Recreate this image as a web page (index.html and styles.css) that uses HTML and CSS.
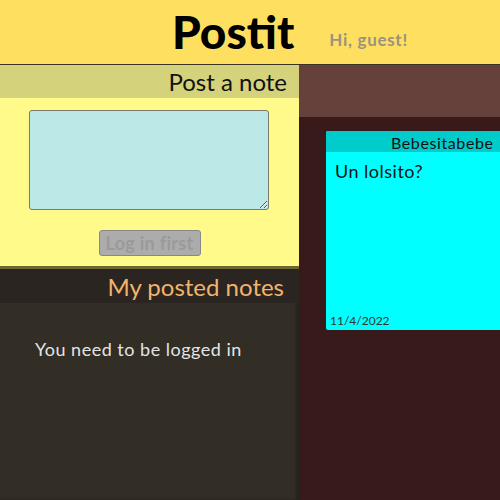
FILE: index.html
```html
<!DOCTYPE html>
<html>
<head>
<meta charset="utf-8">
<link rel="stylesheet" href="styles.css">
</head>
<body>
<header class="topbar">
  <h1 class="brand">Postit</h1>
  <span class="greeting">Hi, guest!</span>
</header>
<main class="layout">
  <aside class="side">
    <section class="post">
      <h2 class="post-title">Post a note</h2>
      <div class="post-form">
        <textarea class="post-input"></textarea>
        <button class="post-btn" disabled>Log in first</button>
      </div>
    </section>
    <section class="mine">
      <h2 class="mine-title">My posted notes</h2>
      <p class="mine-msg">You need to be logged in</p>
    </section>
  </aside>
  <section class="board">
    <div class="board-top"></div>
    <div class="board-notes">
      <article class="note">
        <div class="note-author">Bebesitabebe</div>
        <div class="note-body">Un lolsito?</div>
        <div class="note-date">11/4/2022</div>
      </article>
    </div>
  </section>
</main>
</body>
</html>
```
FILE: styles.css
```css
* { box-sizing: border-box; }
html, body { margin: 0; height: 100%; }
body {
  font-family: Lato, "Open Sans", sans-serif;
  background: #381a1a;
  overflow: hidden;
}
.topbar {
  height: 65px;
  background: #ffdf60;
  border-bottom: 1px solid #3a3420;
  display: flex;
  align-items: flex-start;
  padding-left: 172px;
}
.brand {
  margin: 0;
  font-size: 46px;
  font-weight: 900;
  line-height: 64px;
  color: #000;
}
.greeting {
  margin: 30px 0 0 35px;
  font-size: 17px;
  line-height: 20px;
  font-weight: 700;
  letter-spacing: 0.7px;
  color: #9a9282;
}
.layout {
  display: grid;
  grid-template-columns: 299px 1fr;
  height: 435px;
}
.side {
  display: flex;
  flex-direction: column;
  background: #322d25;
  box-shadow: inset -3px 0 3px rgba(0,0,0,0.25);
}
.post {
  background: #fffa8a;
  border-bottom: 3px solid #6b6530;
}
.post-title {
  margin: 0;
  height: 33px;
  background: #d4d27a;
  font-size: 24px;
  font-weight: 400;
  line-height: 34px;
  text-align: right;
  padding-right: 12px;
  color: #111;
}
.post-form {
  display: flex;
  flex-direction: column;
  align-items: center;
  padding: 12px 0 10px;
  gap: 20px;
}
.post-input {
  display: block;
  width: 240px;
  height: 100px;
  margin-left: -1px;
  background: #bde8e8;
  border: 1px solid #7a7a6a;
  border-radius: 3px;
  resize: both;
}
.post-btn {
  font-family: Lato, sans-serif;
  font-size: 18px;
  font-weight: 700;
  letter-spacing: 0.3px;
  width: 102px;
  height: 26px;
  padding: 0;
  color: #9a9a9a;
  background: #acacac;
  border: 1px solid #888;
  border-radius: 3px;
}
.mine { flex: 1; }
.mine-title {
  margin: 0;
  height: 34px;
  background: #2a2520;
  font-size: 24px;
  font-weight: 400;
  line-height: 36px;
  text-align: right;
  padding-right: 15px;
  color: #f2b36c;
}
.mine-msg {
  margin: 35px 0 0 35px;
  font-size: 18px;
  letter-spacing: 0.5px;
  color: #e4e4e4;
}
.board { display: flex; flex-direction: column; min-width: 0; overflow: hidden; }
.board-top { height: 52px; background: #66403a; }
.board-notes { padding: 14px 0 0 27px; display: flex; }
.note {
  flex: none;
  width: 240px;
  height: 199px;
  background: #00ffff;
  border-radius: 2px;
  display: flex;
  flex-direction: column;
}
.note-author {
  height: 21px;
  background: #00cccc;
  font-size: 16px;
  letter-spacing: 0.6px;
  line-height: 23px;
  padding-left: 65px;
  color: #111;
  border-radius: 2px 2px 0 0;
}
.note-body {
  flex: 1;
  padding: 8px 9px;
  font-size: 18px;
  letter-spacing: 0.5px;
  color: #111;
}
.note-date {
  padding: 0 0 2px 4px;
  font-size: 12px;
  color: #333;
}
```
